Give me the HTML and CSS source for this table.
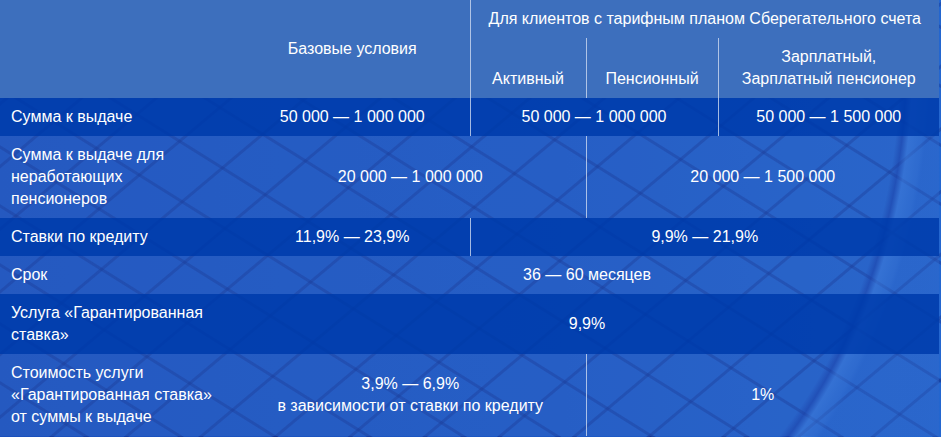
FILE: index.html
```html
<!DOCTYPE html>
<html lang="ru">
<head>
<meta charset="utf-8">
<title>Условия кредита</title>
<link rel="stylesheet" href="styles.css">
</head>
<body>
<div class="page">
  <table class="tariffs">
    <colgroup>
      <col class="c-label">
      <col class="c-base">
      <col class="c-active">
      <col class="c-pension">
      <col class="c-salary">
    </colgroup>
    <thead>
      <tr class="head-top">
        <th rowspan="2" class="blank"></th>
        <th rowspan="2" class="base-head">Базовые условия</th>
        <th colspan="3" class="sep">Для клиентов с тарифным планом Сберегательного счета</th>
      </tr>
      <tr class="head-sub">
        <th class="sep">Активный</th>
        <th class="sep">Пенсионный</th>
        <th class="sep">Зарплатный,<br>Зарплатный пенсионер</th>
      </tr>
    </thead>
    <tbody>
      <tr class="dark">
        <td class="label">Сумма к выдаче</td>
        <td>50 000 — 1 000 000</td>
        <td colspan="2" class="sep">50 000 — 1 000 000</td>
        <td class="sep">50 000 — 1 500 000</td>
      </tr>
      <tr class="light">
        <td class="label">Сумма к выдаче для<br>неработающих<br>пенсионеров</td>
        <td colspan="2">20 000 — 1 000 000</td>
        <td colspan="2" class="sep">20 000 — 1 500 000</td>
      </tr>
      <tr class="dark">
        <td class="label">Ставки по кредиту</td>
        <td>11,9% — 23,9%</td>
        <td colspan="3" class="sep">9,9% — 21,9%</td>
      </tr>
      <tr class="light">
        <td class="label">Срок</td>
        <td colspan="4">36 — 60 месяцев</td>
      </tr>
      <tr class="dark">
        <td class="label">Услуга «Гарантированная<br>ставка»</td>
        <td colspan="4">9,9%</td>
      </tr>
      <tr class="light">
        <td class="label">Стоимость услуги<br>«Гарантированная ставка»<br>от суммы к выдаче</td>
        <td colspan="2">3,9% — 6,9%<br>в зависимости от ставки по кредиту</td>
        <td colspan="2" class="sep">1%</td>
      </tr>
    </tbody>
  </table>
</div>
</body>
</html>
```

FILE: styles.css
```css
html, body {
  margin: 0;
  padding: 0;
}

body {
  width: 941px;
  height: 437px;
  overflow: hidden;
  font-family: "Liberation Sans", Arial, sans-serif;
  font-size: 16px;
  color: #ffffff;
  background-color: #1b56c2;
  background-image:
    radial-gradient(ellipse 430px 565px at -141px 60px,
      rgba(0,0,0,0) 93%,
      rgba(10,40,150,0.55) 94.5%,
      rgba(70,140,235,0.5) 96%,
      rgba(60,130,230,0.3) 99%,
      rgba(40,110,220,0.2) 100%),
    repeating-linear-gradient(32deg,
      rgba(0,0,0,0) 0 44px,
      rgba(10,30,120,0.38) 45px 47px,
      rgba(0,0,0,0) 48px 50px),
    repeating-linear-gradient(-40deg,
      rgba(0,0,0,0) 0 42px,
      rgba(10,30,120,0.38) 43px 45px,
      rgba(0,0,0,0) 46px 48px),
    linear-gradient(90deg, #1a50bc 0%, #1c58c4 60%, #2264cc 100%);
  background-size: 300px 437px, auto, auto, auto;
  background-position: 641px 0, 0 0, 0 0, 0 0;
  background-repeat: no-repeat, repeat, repeat, no-repeat;
}

.page {
  width: 941px;
}

.tariffs {
  width: 939px;
  table-layout: fixed;
  border-collapse: collapse;
  border-spacing: 0;
}

.c-label { width: 235px; }
.c-base { width: 235px; }
.c-active { width: 116px; }
.c-pension { width: 132px; }
.c-salary { width: 221px; }

.tariffs th,
.tariffs td {
  padding: 8px 4px;
  line-height: 22px;
  font-weight: normal;
  text-align: center;
  vertical-align: middle;
}

.tariffs thead th {
  background: #3d6fbd;
}

.head-top th {
  vertical-align: middle;
}

.head-sub th {
  vertical-align: bottom;
}

.tariffs .sep {
  border-left: 1px solid rgba(205, 218, 240, 0.8);
}

.tariffs td.label {
  text-align: left;
  padding-left: 11px;
}

.dark td {
  background: rgba(0, 60, 172, 0.88);
}

.light td {
  background: rgba(55, 105, 200, 0.38);
}
```
